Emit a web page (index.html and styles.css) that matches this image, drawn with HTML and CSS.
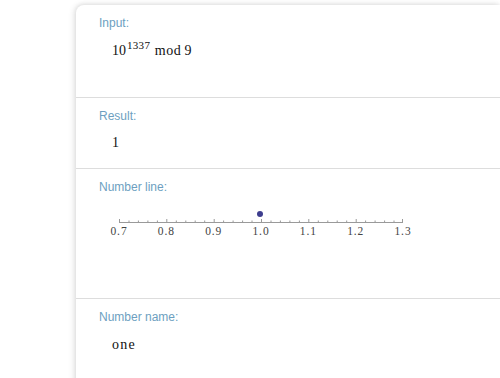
FILE: index.html
```html
<!DOCTYPE html>
<html>
<head>
<meta charset="utf-8">
<link rel="stylesheet" href="styles.css">
</head>
<body>
<div class="page">
  <div class="card">
    <section class="pod pod-input">
      <div class="label">Input:</div>
      <div class="math">10<sup>1337</sup> <span class="op">mod</span><span class="num">9</span></div>
    </section>
    <section class="pod pod-result">
      <div class="label">Result:</div>
      <div class="math">1</div>
    </section>
    <section class="pod pod-line">
      <div class="label">Number line:</div>
      <svg class="numline" width="310" height="40" viewBox="0 0 310 40">
        <circle cx="151" cy="9" r="3" fill="#3e3d8e"/>
        <line x1="10" y1="17.5" x2="294" y2="17.5" stroke="#9a9a9a" stroke-width="1"/>
        <g class="ticklabels" fill="#444">
          <text x="10" y="30">0.7</text>
          <text x="57.3" y="30">0.8</text>
          <text x="104.7" y="30">0.9</text>
          <text x="152" y="30">1.0</text>
          <text x="199.3" y="30">1.1</text>
          <text x="246.7" y="30">1.2</text>
          <text x="294" y="30">1.3</text>
        </g>
        <g stroke="#9a9a9a" stroke-width="1">
          <path d="M10.5 14v3M20 15.5v2M29.4 15.5v2M38.9 15.5v2M48.4 15.5v2M57.8 14v3M67.3 15.5v2M76.8 15.5v2M86.2 15.5v2M95.7 15.5v2M105.2 14v3M114.6 15.5v2M124.1 15.5v2M133.6 15.5v2M143 15.5v2M152.5 14v3M162 15.5v2M171.4 15.5v2M180.9 15.5v2M190.4 15.5v2M199.8 14v3M209.3 15.5v2M218.8 15.5v2M228.2 15.5v2M237.7 15.5v2M247.2 14v3M256.6 15.5v2M266.1 15.5v2M275.6 15.5v2M285 15.5v2M293.5 14v3"/>
        </g>
      </svg>
    </section>
    <section class="pod pod-name">
      <div class="label">Number name:</div>
      <div class="math word">one</div>
    </section>
  </div>
</div>
</body>
</html>
```

FILE: styles.css
```css
html, body {
  margin: 0;
  padding: 0;
  background: #ffffff;
}
.page {
  padding: 5px 0 0 76px;
  height: 373px;
  overflow: hidden;
}
.card {
  background: #fff;
  border-top-left-radius: 8px;
  box-shadow: -2px 0 6px rgba(0,0,0,0.10), 0 -1px 4px rgba(0,0,0,0.08);
  min-height: 400px;
}
.pod {
  border-bottom: 1px solid #dddddd;
  padding: 11px 0 0 23px;
  box-sizing: border-box;
}
.pod-input { height: 93px; }
.pod-result { height: 71px; }
.pod-line { height: 130px; }
.pod-name { border-bottom: none; }
.label {
  font-family: "Liberation Sans", Arial, sans-serif;
  font-size: 12px;
  line-height: 15px;
  color: #6d9fbf;
}
.math {
  font-family: "Liberation Serif", "Times New Roman", serif;
  font-size: 14px;
  line-height: 18px;
  color: #111;
  margin: 11px 0 0 13px;
}
.math sup {
  font-size: 11px;
  vertical-align: 6px;
  line-height: 0;
  margin-left: 1px;
  letter-spacing: 0.3px;
}
.op { margin-left: 1px; letter-spacing: 0.6px; }
.num { margin-left: 3px; }
.pod-result .math { margin-top: 10px; }
.word { letter-spacing: 1.2px; margin-top: 11px; }
.numline {
  display: block;
  margin: 10px 0 0 10px;
}
.ticklabels text {
  font-family: "Liberation Serif", "Times New Roman", serif;
  font-size: 11.5px;
  letter-spacing: 0.9px;
  text-anchor: middle;
}
```
